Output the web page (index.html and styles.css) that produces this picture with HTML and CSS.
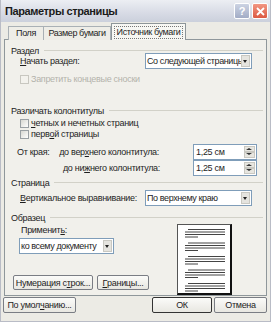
FILE: index.html
```html
<!DOCTYPE html>
<html lang="ru">
<head>
    <meta charset="UTF-8">
    <title>Параметры страницы</title>
    <link rel="stylesheet" href="styles.css">
</head>
<body>
<div class="dlg">
    <div class="titlebar">
        <span class="title">Параметры страницы</span>
        <span class="tb-btn help">?</span>
        <span class="tb-btn close">
            <svg width="9" height="9" viewBox="0 0 9 9"><path d="M1 1L8 8M8 1L1 8" stroke="#fff" stroke-width="1.8"/></svg>
        </span>
    </div>

    <div class="tabs">
        <span class="tab t1">Поля</span>
        <span class="tab t2">Размер бумаги</span>
        <span class="tab t3 active"><span class="focus">Источник бумаги</span></span>
    </div>

    <div class="panel">
        <!-- Раздел -->
        <div class="grp-title">Раздел</div>
        <div class="row r-start">
            <span class="lbl"><u>Н</u>ачать раздел:</span>
            <span class="select w-wide">Со следующей страницы<span class="arrow"></span></span>
        </div>
        <div class="check disabled"><span class="box"></span>Запретить концевые сноски</div>

        <!-- Различать колонтитулы -->
        <div class="grp-title g2">Различать колонтитулы</div>
        <div class="check c1"><span class="box"></span><u>ч</u>етных и нечетных страниц</div>
        <div class="check c2"><span class="box"></span>перв<u>о</u>й страницы</div>
        <div class="row r-edge">
            <span class="edge">От края:</span>
            <span class="lbl-r">до вер<u>х</u>него колонтитула:</span>
            <span class="spin">1,25 см<span class="spin-btn"><i class="up"></i><i class="down"></i></span></span>
        </div>
        <div class="row r-edge2">
            <span class="lbl-r">до ни<u>ж</u>него колонтитула:</span>
            <span class="spin">1,25 см<span class="spin-btn"><i class="up"></i><i class="down"></i></span></span>
        </div>

        <!-- Страница -->
        <div class="grp-title g3">Страница</div>
        <div class="row r-valign">
            <span class="lbl"><u>В</u>ертикальное выравнивание:</span>
            <span class="select w-wide">По верхнему краю<span class="arrow"></span></span>
        </div>

        <!-- Образец -->
        <div class="grp-title g4">Образец</div>
        <div class="sample">
            <div class="sample-left">
                <span class="apply-lbl">Применит<u>ь</u>:</span>
                <span class="select w-apply">ко всему документу<span class="arrow"></span></span>
                <div class="btn-row">
                    <span class="btn b-num">Нумерация с<u>т</u>рок...</span>
                    <span class="btn b-brd"><u>Г</u>раницы...</span>
                </div>
            </div>
            <div class="sheet">
                <svg width="52" height="69" viewBox="0 0 52 69">
                    <g stroke="#444" stroke-width="1">
                        <path d="M10 4.5H47M7 7H47M7 9.5H47M7 12H20"/>
                        <path d="M10 18H47M7 20.5H47M7 23H47M7 25.5H20"/>
                        <path d="M10 31.5H47M7 34H47M7 36.5H47M7 39H20"/>
                        <path d="M10 45H47M7 47.5H47M7 50H47M7 52.5H20"/>
                        <path d="M10 58.5H47M7 61H47M7 63.5H47M7 66H20"/>
                    </g>
                </svg>
            </div>
        </div>
    </div>

    <div class="footer">
        <span class="btn b-def">По умол<u>ч</u>анию...</span>
        <span class="spacer"></span>
        <span class="btn b-ok">ОК</span>
        <span class="btn b-cancel">Отмена</span>
    </div>
</div>
</body>
</html>
```

FILE: styles.css
```css
body{margin:0;background:#fff;}
u{text-decoration:underline;text-underline-offset:1px;}

.dlg {
    width: 269px;
    height: 321px;
    background: #ecebe5;
    border: 1px solid #b9bcc6;
    border-top: none;
    font-family: "Liberation Sans", Arial, sans-serif;
    font-size: 9px;
    letter-spacing: -0.3px;
    white-space: nowrap;
    color: #1e1e1e;
    display: flex;
    flex-direction: column;
}

/* заголовок окна */
.titlebar {
    height: 22px;
    flex: none;
    display: flex;
    align-items: center;
    padding: 0 2px 0 4px;
    background: linear-gradient(#eceef3, #d9dce6 55%, #cbd0dc);
}
.title{flex:1;font-weight:bold;font-size:11px;letter-spacing:-0.4px;color:#1a1a1a;}
.tb-btn {
    width: 16px;
    height: 16px;
    border: 1px solid #fff;
    border-radius: 2px;
    margin-left: 2px;
    display: flex;
    align-items: center;
    justify-content: center;
    box-sizing: border-box;
}
.help{background:linear-gradient(#ccd3e3,#a2acc6);color:#fff;font-weight:bold;font-size:11px;letter-spacing:0;}
.close{background:linear-gradient(#f19683,#dc5a44);}

/* вкладки */
.tabs {
    flex: none;
    display: flex;
    align-items: flex-end;
    padding: 0 0 0 7px;
    height: 18px;
    margin-bottom: -1px;
    position: relative;
    z-index: 1;
}
.tab {
    height: 14px;
    line-height: 13px;
    border: 1px solid #a9b0b5;
    border-bottom: none;
    background: #eeede7;
    box-sizing: border-box;
    text-align: center;
    letter-spacing: -0.4px;
}
.t1{width:36px;}
.t2{width:67px;border-left:none;}
.t3{width:75px;}
.tab.active{height:17px;background:#f7f7f3;border-color:#8d9599;padding:2px 2px 0;}
.focus{display:block;border:1px dotted #777;line-height:11px;}

.panel {
    flex: none;
    margin: 0 3px 0 3px;
    height: 257px;
    border: 1px solid #8f979b;
    background: #f1f0eb;
    padding: 4px 3px 0 6px;
    box-sizing: border-box;
    display: flex;
    flex-direction: column;
}

.grp-title {
    flex: none;
    display: flex;
    align-items: center;
    height: 13px;
    color: #222;
}
.grp-title::after {
    content: "";
    flex: 1;
    margin-left: 5px;
    border-top: 1px solid #d2d1c8;
}
.g2{margin-top:19px;}
.g3{margin-top:0;}
.g4{margin-top:5px;}

.row{flex:none;display:flex;align-items:center;height:16px;padding-right:11px;}
.r-start{margin-top:-4px;padding-left:9px;}
.lbl{flex:1;}
.lbl-r{flex:1;text-align:right;padding-right:34px;}
.r-edge{margin-top:4px;padding-left:6px;padding-right:6px;}
.edge{width:40px;}
.r-edge2{padding-right:6px;}
.r-edge2 .lbl-r{padding-right:33px;}
.r-valign{margin-top:1px;padding-left:9px;}

.select {
    height: 16px;
    border: 1px solid #7f9db9;
    background: #fff;
    box-sizing: border-box;
    display: flex;
    align-items: center;
    padding-left: 1px;
    position: relative;
    overflow: hidden;
    letter-spacing: -0.4px;
}
.w-wide{width:107px;}
.w-apply{width:95px;margin:1px 0 0 8px;}
.arrow {
    position: absolute;
    right: 1px;
    top: 1px;
    width: 9px;
    height: 12px;
    background: #e5e4df;
    border: 1px solid #c9c8c1;
    box-sizing: border-box;
}
.arrow::after {
    content: "";
    position: absolute;
    left: 1px;
    top: 4px;
    border-left: 2.5px solid transparent;
    border-right: 2.5px solid transparent;
    border-top: 3px solid #222;
}

.spin {
    width: 64px;
    height: 16px;
    border: 1px solid #7f9db9;
    background: #fff;
    box-sizing: border-box;
    display: flex;
    align-items: center;
    padding-left: 2px;
    position: relative;
}
.spin-btn {
    position: absolute;
    right: 1px;
    top: 1px;
    width: 11px;
    height: 12px;
    display: flex;
    flex-direction: column;
}
.spin-btn i{flex:1;background:#e7e6e0;border:1px solid #c9c8c1;position:relative;}
.spin-btn i::after {
    content: "";
    position: absolute;
    left: 1px;
    top: 1px;
    border-left: 3px solid transparent;
    border-right: 3px solid transparent;
}
.spin-btn .up::after{border-bottom:2px solid #333;}
.spin-btn .down::after{top:0;border-top:2px solid #333;}

.check {
    flex: none;
    display: flex;
    align-items: center;
    height: 12px;
    padding-left: 9px;
}
.c2{margin-top:-1px;}
.box {
    width: 9px;
    height: 9px;
    border: 1px solid #9aa0a4;
    background: linear-gradient(135deg,#d8d8d2,#fff);
    box-sizing: border-box;
    margin-right: 2px;
}
.disabled{color:#b4b3ab;margin-top:4px;}
.disabled .box{border-color:#c8c7c0;background:#f3f2ed;}

.sample{display:flex;flex:1;}
.sample-left{flex:1;display:flex;flex-direction:column;}
.apply-lbl{height:13px;line-height:13px;margin-left:10px;}
.btn-row{display:flex;margin-top:auto;margin-left:2px;margin-bottom:5px;gap:4px;}

.btn {
    flex: none;
    height: 15px;
    border: 1px solid #7a7d84;
    border-radius: 2px;
    background: linear-gradient(#fbfbf9,#e8e7e1);
    box-sizing: border-box;
    display: flex;
    align-items: center;
    justify-content: center;
    padding: 0 2px;
}
.b-num{width:80px;}
.b-brd{width:52px;}

.sheet {
    width: 55px;
    height: 71px;
    margin: 0 31px 0 0;
    background: #fff;
    border: 1px solid #555;
    border-right: 2px solid #111;
    border-bottom: 2px solid #111;
    box-sizing: border-box;
}
.sheet svg{display:block;}

.footer{display:flex;align-items:center;padding:1px 3px 0 2px;}
.footer .btn{height:16px;}
.b-def{width:73px;}
.spacer{flex:1;}
.b-ok{width:60px;margin-right:2px;border-color:#333;}
.b-cancel{width:53px;}
```
